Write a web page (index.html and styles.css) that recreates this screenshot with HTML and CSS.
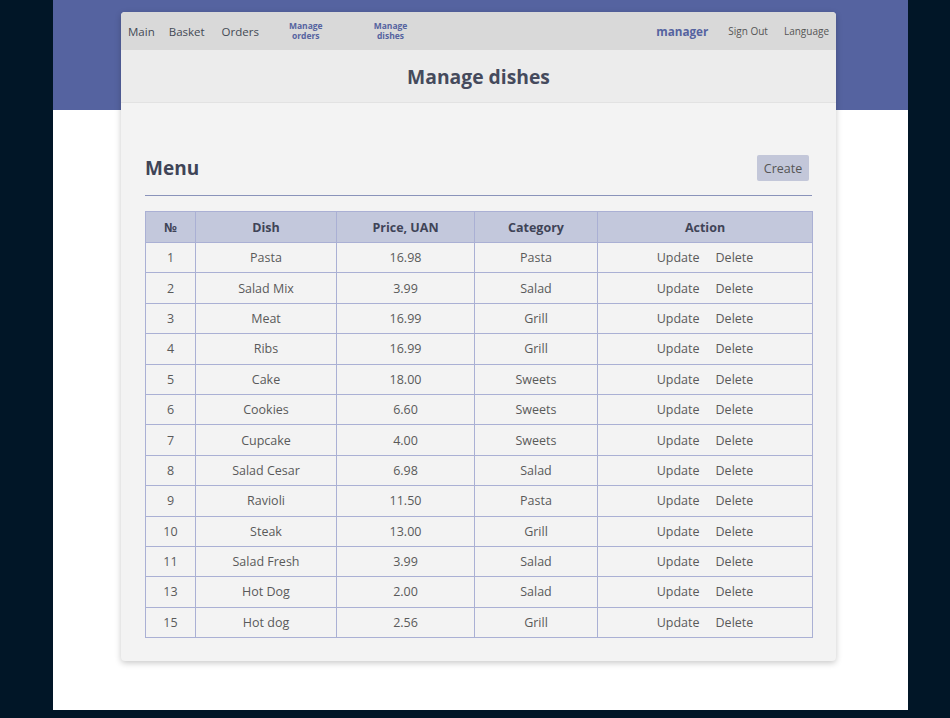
FILE: index.html
```html
<!DOCTYPE html>
<html>
<head>
<meta charset="utf-8">
<link rel="stylesheet" href="styles.css">
</head>
<body>
<div class="frame">
  <div class="card">
    <nav class="nav">
      <a class="nav-link">Main</a>
      <a class="nav-link">Basket</a>
      <a class="nav-link">Orders</a>
      <a class="nav-manage nm-orders">Manage<br>orders</a>
      <a class="nav-manage nm-dishes">Manage<br>dishes</a>
      <span class="spacer"></span>
      <a class="nav-user">manager</a>
      <a class="nav-small">Sign Out</a>
      <a class="nav-small nav-lang">Language</a>
    </nav>
    <header class="title">Manage dishes</header>
    <section class="content">
      <div class="menu-head">
        <h2 class="menu-title">Menu</h2>
        <button class="btn-create">Create</button>
      </div>
      <hr class="rule">
      <table class="dishes">
        <colgroup>
          <col class="c1"><col class="c2"><col class="c3"><col class="c4"><col class="c5">
        </colgroup>
        <thead>
          <tr><th>№</th><th>Dish</th><th>Price, UAN</th><th>Category</th><th>Action</th></tr>
        </thead>
        <tbody>
          <tr><td>1</td><td>Pasta</td><td>16.98</td><td>Pasta</td><td class="act"><a>Update</a><a>Delete</a></td></tr>
          <tr><td>2</td><td>Salad Mix</td><td>3.99</td><td>Salad</td><td class="act"><a>Update</a><a>Delete</a></td></tr>
          <tr><td>3</td><td>Meat</td><td>16.99</td><td>Grill</td><td class="act"><a>Update</a><a>Delete</a></td></tr>
          <tr><td>4</td><td>Ribs</td><td>16.99</td><td>Grill</td><td class="act"><a>Update</a><a>Delete</a></td></tr>
          <tr><td>5</td><td>Cake</td><td>18.00</td><td>Sweets</td><td class="act"><a>Update</a><a>Delete</a></td></tr>
          <tr><td>6</td><td>Cookies</td><td>6.60</td><td>Sweets</td><td class="act"><a>Update</a><a>Delete</a></td></tr>
          <tr><td>7</td><td>Cupcake</td><td>4.00</td><td>Sweets</td><td class="act"><a>Update</a><a>Delete</a></td></tr>
          <tr><td>8</td><td>Salad Cesar</td><td>6.98</td><td>Salad</td><td class="act"><a>Update</a><a>Delete</a></td></tr>
          <tr><td>9</td><td>Ravioli</td><td>11.50</td><td>Pasta</td><td class="act"><a>Update</a><a>Delete</a></td></tr>
          <tr><td>10</td><td>Steak</td><td>13.00</td><td>Grill</td><td class="act"><a>Update</a><a>Delete</a></td></tr>
          <tr><td>11</td><td>Salad Fresh</td><td>3.99</td><td>Salad</td><td class="act"><a>Update</a><a>Delete</a></td></tr>
          <tr><td>13</td><td>Hot Dog</td><td>2.00</td><td>Salad</td><td class="act"><a>Update</a><a>Delete</a></td></tr>
          <tr><td>15</td><td>Hot dog</td><td>2.56</td><td>Grill</td><td class="act"><a>Update</a><a>Delete</a></td></tr>
        </tbody>
      </table>
    </section>
  </div>
</div>
</body>
</html>
```
FILE: styles.css
```css
html, body {
  margin: 0;
  padding: 0;
  background: #011627;
}
body {
  font-family: "Open Sans", "Liberation Sans", sans-serif;
  color: #555;
}
.frame {
  margin-left: 53px;
  width: 855px;
  height: 710px;
  background: linear-gradient(to bottom, #5563a0 0, #5563a0 110px, #ffffff 110px);
  padding-top: 12px;
  box-sizing: border-box;
}
.card {
  margin-left: 68px;
  width: 715px;
  background: #f3f3f3;
  border-radius: 4px;
  box-shadow: 0 2px 6px rgba(0, 0, 0, 0.22);
  overflow: hidden;
}
.nav {
  height: 38px;
  background: #d9d9d9;
  display: flex;
  align-items: center;
  padding: 0 7px;
}
.nav a { cursor: pointer; }
.nav-link {
  font-size: 11.5px;
  color: #444a55;
  margin-right: 17px;
}
.nav-link:nth-child(1) { margin-right: 14px; }
.nav-manage {
  font-size: 8.5px;
  font-weight: 700;
  color: #5563a0;
  text-align: center;
  line-height: 10px;
}
.nm-orders { margin-left: 13px; }
.nm-dishes { margin-left: 51px; }
.spacer { flex: 1; }
.nav-user {
  font-size: 11.7px;
  font-weight: 700;
  color: #5563a0;
  margin-right: 20px;
}
.nav-small {
  font-size: 10px;
  color: #555;
  margin-right: 16px;
}
.nav-lang { margin-right: 0; }
.title {
  height: 53px;
  background: #ececec;
  border-bottom: 1px solid #e2e2e2;
  display: flex;
  align-items: center;
  justify-content: center;
  font-size: 19.3px;
  font-weight: 700;
  color: #454a5c;
  box-sizing: border-box;
}
.content {
  padding: 52px 24px 23px;
}
.menu-head {
  display: flex;
  align-items: center;
  justify-content: space-between;
  height: 26px;
}
.menu-title {
  margin: 0;
  font-size: 19px;
  font-weight: 700;
  color: #3f4457;
}
.btn-create {
  height: 26px;
  width: 52px;
  border: none;
  border-radius: 2px;
  background: #c3c7d9;
  color: #555;
  font-family: inherit;
  font-size: 12.5px;
  padding: 0;
  margin-right: 3px;
}
.rule {
  margin: 14px 0 0;
  border: none;
  border-top: 1px solid #8a93ba;
  height: 0;
}
.dishes {
  margin-top: 15px;
  width: 100%;
  border-collapse: collapse;
  table-layout: fixed;
  font-size: 12.5px;
}
.c1 { width: 50px; }
.c2 { width: 141px; }
.c3 { width: 138px; }
.c4 { width: 123px; }
.c5 { width: 215px; }
.dishes th, .dishes td {
  border: 1px solid #aab0d4;
  text-align: center;
  padding: 0;
}
.dishes th {
  height: 30px;
  background: #c3c8dc;
  color: #3f4457;
  font-weight: 700;
  font-size: 12.5px;
}
.dishes td {
  height: 29.4px;
  color: #5a5a5a;
}
.act a {
  margin: 0 8px;
}
```
